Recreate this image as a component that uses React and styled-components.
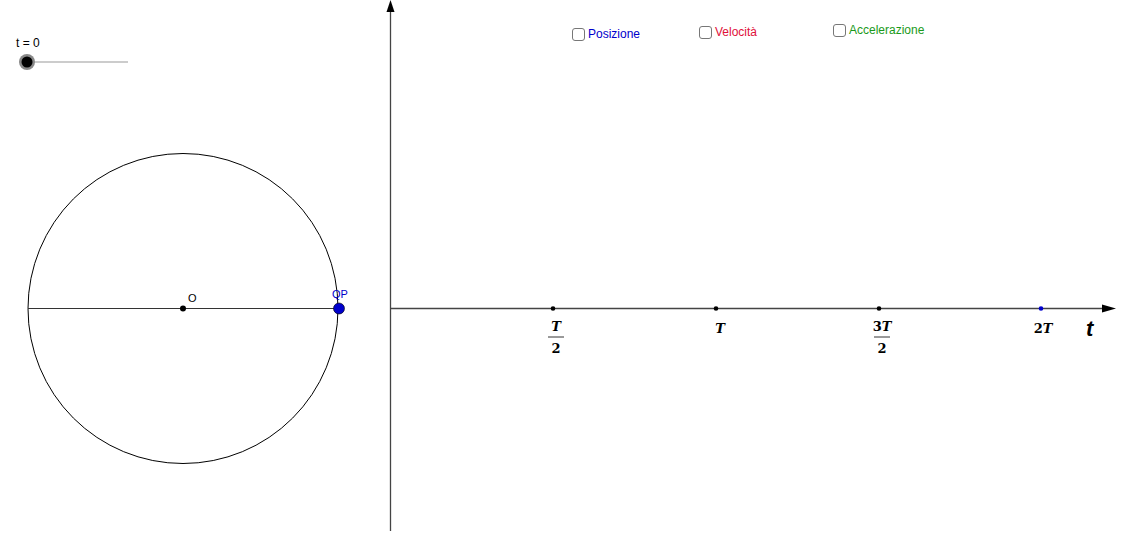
import React from "react";
import styled, { createGlobalStyle } from "styled-components";

const Global = createGlobalStyle`
  body { margin: 0; background: #fff; font-family: "Liberation Sans", Arial, sans-serif; }
`;

const Canvas = styled.div`
  position: relative;
  width: 1144px;
  height: 534px;
  overflow: hidden;
  background: #fff;
`;

const Drawing = styled.svg`
  display: block;
`;

const Toggle = styled.label`
  position: absolute;
  left: ${(p) => p.x}px;
  top: ${(p) => p.y}px;
  display: flex;
  align-items: center;
  gap: 3px;
  font-size: 12px;
  color: ${(p) => p.color};
`;

const Box = styled.span`
  width: 11px;
  height: 11px;
  border: 1.5px solid #777;
  border-radius: 3px;
  background: #fff;
`;

const SliderLabel = styled.div`
  position: absolute;
  left: 16px;
  top: 36px;
  font-size: 12px;
  color: #000;
`;

const Serif = { fontFamily: "'DejaVu Serif', 'Liberation Serif', serif", fontWeight: "bold", fontSize: 13 };
const It = { fontStyle: "italic" };

const Frac = ({ x, pre }) => (
  <g textAnchor="middle" style={Serif}>
    <text x={x} y={331}>{pre}<tspan style={It}>T</tspan></text>
    <line x1={x - 8} y1={337} x2={x + 8} y2={337} stroke="#000" strokeWidth="0.8" />
    <text x={x} y={353}>2</text>
  </g>
);

export default function App() {
  return (
    <Canvas>
      <Global />
      <Drawing width="1144" height="534">
        <line x1="27" y1="62" x2="128" y2="62" stroke="#999" strokeWidth="1" />
        <circle cx="27" cy="62" r="8" fill="#888" />
        <circle cx="27" cy="62" r="5.5" fill="#000" />
        <circle cx="183" cy="308.5" r="155" fill="none" stroke="#000" strokeWidth="1" />
        <line x1="28" y1="308.5" x2="338" y2="308.5" stroke="#333" strokeWidth="1" />
        <circle cx="183" cy="308.5" r="3" fill="#000" />
        <text x="188" y="302" fontSize="11" fill="#000">O</text>
        <circle cx="339" cy="308.5" r="5.5" fill="#0000cc" stroke="#000" strokeWidth="0.6" />
        <text x="332" y="298" fontSize="11" fill="#0000cc">QP</text>
        <line x1="390.5" y1="8" x2="390.5" y2="531" stroke="#444" strokeWidth="1.3" />
        <polygon points="390.5,0 386.5,12 394.5,12" fill="#000" />
        <line x1="390" y1="308.5" x2="1104" y2="308.5" stroke="#444" strokeWidth="1.3" />
        <polygon points="1116,308.5 1102,304.5 1102,312.5" fill="#000" />
        {[553, 716, 879].map((x) => (
          <circle key={x} cx={x} cy="308.5" r="2.3" fill="#000" />
        ))}
        <circle cx="1041" cy="308.5" r="2.3" fill="#0000cc" />
        <Frac x={556} pre="" />
        <text x="720" y="333" textAnchor="middle" style={{ ...Serif, ...It }}>T</text>
        <Frac x={882} pre="3" />
        <text x="1043" y="333" textAnchor="middle" style={Serif}>2<tspan style={It}>T</tspan></text>
        <text x="1086" y="336" fontSize="22" fontWeight="bold" fontStyle="italic" fill="#000">t</text>
      </Drawing>
      <SliderLabel>t = 0</SliderLabel>
      <Toggle x={572} y={27} color="#0000cc"><Box />Posizione</Toggle>
      <Toggle x={699} y={25} color="#e0103a"><Box />Velocità</Toggle>
      <Toggle x={833} y={23} color="#1a9a1a"><Box />Accelerazione</Toggle>
    </Canvas>
  );
}
